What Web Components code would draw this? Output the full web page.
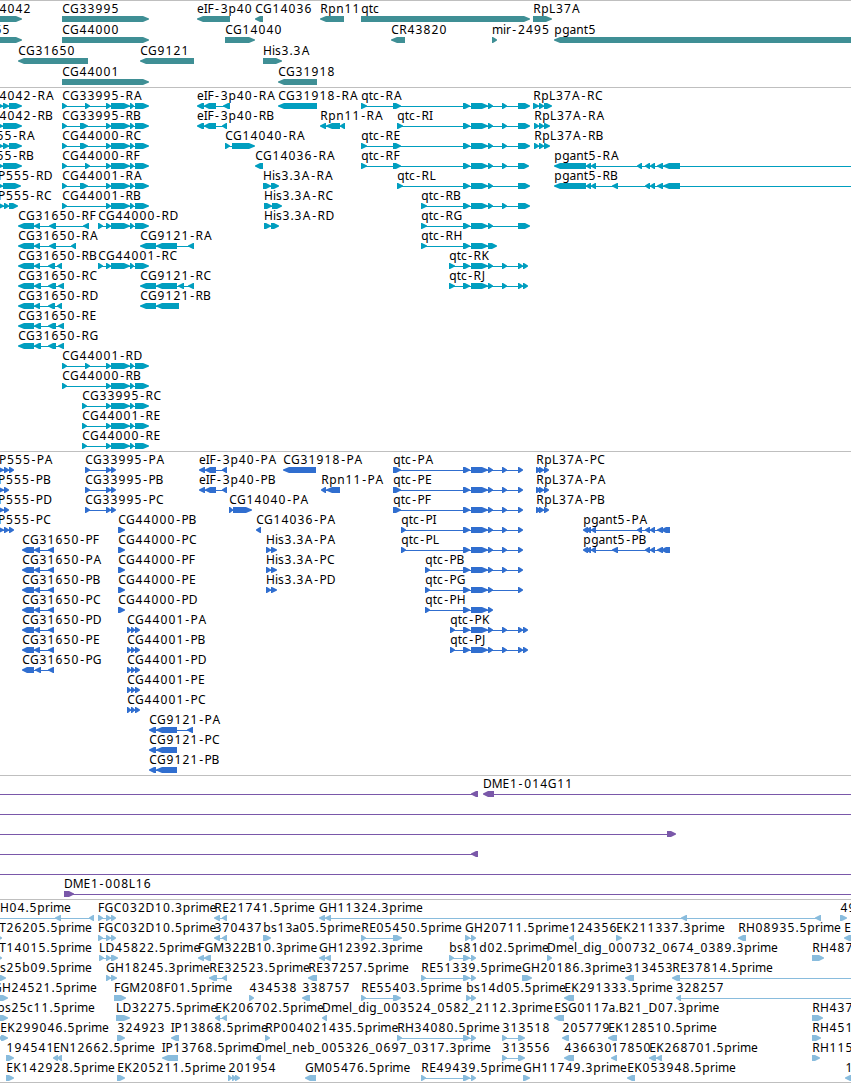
<!DOCTYPE html>
<html lang="en">
<head>
<meta charset="utf-8">
<title>Genome browser</title>
<style>
html, body { margin: 0; background: #fff; overflow: hidden; }
</style>
</head>
<body>
<genome-browser>
  <genome-track name="genes" pitch="21" style="--ink:#3f8f95"></genome-track>
  <genome-track name="transcripts" style="--ink:#009ebf"></genome-track>
  <genome-track name="proteins" style="--ink:#306ecf"></genome-track>
  <genome-track name="clones" style="--ink:#7a58a9"></genome-track>
  <genome-track name="ests" style="--ink:#89bcdd"></genome-track>
</genome-browser>
<script>
// Shared exon sets. Every feature reads: label | label x | strand | blocks | optional connector span
const SETS = {
  T: '106-111,111-130,130-134,135-149',
  Q: '463-470,471-488,488-493',
  U: '463-470,471-476',
  G: '645-650,650-655,657-663'
};
const DATA = {
genes: `4042|-1|>|-9-22;CG33995|62|>|62-149;eIF-3p40|197|<|197-230;CG14036|255|<|255-263;Rpn11|320|<|320-344;qtc|361|>|361-530;RpL37A|533|>|533-552
55|-6|>|-9-22;CG44000|62|>|62-149;CG14040|225|>|225-255;CR43820|391|<|391-405;mir-2495|492|>|492-497;pgant5|554|<|554-870
CG31650|18|<|18-88;CG9121|140|<|140-194;His3.3A|263|>|263-282
CG44001|62|>|62-149;CG31918|278|<|278-317`,
transcripts: `4042-RA|-1|>|-3-3,3-9,9-22;CG33995-RA|62|>|62-67,85-90,T;eIF-3p40-RA|197|<|197-204,204-216,223-230;CG31918-RA|278|<|278-317;qtc-RA|361|>|361-367,393-401,Q,502-507,518-530;RpL37A-RC|533|>|533-539,539-544,544-552
4042-RB|-1|>|-3-3,3-22;CG33995-RB|62|>|62-67,80-88,T;eIF-3p40-RB|197|<|197-204,204-216,222-227;Rpn11-RA|320|<|320-326,326-340,340-345;qtc-RI|397|>|397-403,Q,502-507,518-530;RpL37A-RA|534|>|534-539,539-544,544-550
55-RA|-4|>|-3-3,3-9,9-22;CG44000-RC|62|>|62-67,80-88,T;CG14040-RA|225|>|225-230,232-255;qtc-RE|361|>|361-367,393-401,Q,502-507,518-530;RpL37A-RB|534|>|534-539,539-544,544-550
55-RB|-4|>|-3-3,3-22;CG44000-RF|62|>|62-67,85-90,T;CG14036-RA|255|<|255-263;qtc-RF|361|>|361-367,393-401,Q,502-507,518-529;pgant5-RA|554|<|554-586,586-591,591-596,637-642,G,663-680|554-870
P555-RD|-2|>|-3-3,3-21;CG44001-RA|62|>|62-67,80-88,T;His3.3A-RA|263|>|263-271,271-279;qtc-RL|397|>|397-403,Q,518-530;pgant5-RB|554|<|554-586,586-591,591-596,612-618,G,663-680|554-870
P555-RC|-2|>|-3-4,4-9,9-18;CG44001-RB|62|>|62-67,T;His3.3A-RC|264|>|264-272,272-282;qtc-RB|421|>|421-427,Q,502-507,518-530
CG31650-RF|18|<|18-34,34-40,49-56,83-89;CG44000-RD|98|>|98-103,T;His3.3A-RD|264|>|264-271,271-279;qtc-RG|421|>|421-427,Q,518-530
CG31650-RA|18|<|18-34,34-40,49-56,71-76;CG9121-RA|140|<|140-156,156-177,188-194;qtc-RH|421|>|421-427,463-470,471-488,488-497
CG31650-RB|18|<|18-34,34-40,48-55,57-62;CG44001-RC|98|>|98-103,T;qtc-RK|449|>|449-455,Q,502-507,518-523,523-528
CG31650-RC|18|<|18-34,34-41,48-56,58-64;CG9121-RC|140|<|140-156,156-177,178-184,188-194;qtc-RJ|449|>|449-455,Q,502-507,518-523,523-528
CG31650-RD|18|<|18-34,34-40,48-55,57-62;CG9121-RB|140|<|140-156,156-179
CG31650-RE|18|<|18-34,34-41,48-56,58-64
CG31650-RG|18|<|18-34,34-41,48-56,58-64
CG44001-RD|62|>|62-67,85-90,T
CG44000-RB|62|>|62-67,T
CG33995-RC|82|>|82-87,T
CG44001-RE|82|>|82-87,T
CG44000-RE|82|>|82-87,T`,
proteins: `P555-PA|-1|>|-2-4,4-9,9-14;CG33995-PA|85|>|85-90,106-111,111-116;eIF-3p40-PA|199|<|199-205,205-216,222-227;CG31918-PA|283|<|283-316;qtc-PA|393|>|393-401,Q,502-507,518-523;RpL37A-PC|536|>|536-541,539-544,544-549
P555-PB|-2|>|-2-4,4-9;CG33995-PB|85|>|85-90,106-111,111-116;eIF-3p40-PB|199|<|199-205,205-216,222-227;Rpn11-PA|321|<|321-326,326-340;qtc-PE|393|>|393-401,Q,502-507,518-523;RpL37A-PA|536|>|536-541,539-544,544-549
P555-PD|-2|>|-2-4,4-9;CG33995-PC|85|>|85-90,106-111,111-116;CG14040-PA|229|>|229-233,233-252;qtc-PF|393|>|393-401,Q,502-507,518-523;RpL37A-PB|536|>|536-541,539-544,544-549
P555-PC|-2|>|-2-4,4-9,9-14;CG44000-PB|118|>|118-125;CG14036-PA|256|<|256-261;qtc-PI|401|>|401-406,Q,502-507,518-523;pgant5-PA|583|<|583-588,586-591,591-596,637-642,G,661-670
CG31650-PF|22|<|22-34,34-40,48-54;CG44000-PC|118|>|118-125;His3.3A-PA|266|>|266-271,271-277;qtc-PL|401|>|401-406,Q,502-507,518-523;pgant5-PB|583|<|583-588,586-591,591-596,612-618,G,661-670
CG31650-PA|22|<|22-34,34-40,48-54;CG44000-PF|118|>|118-125;His3.3A-PC|266|>|266-271,271-277;qtc-PB|425|>|425-430,Q,502-507,518-523
CG31650-PB|22|<|22-34,34-40,48-54;CG44000-PE|118|>|118-125;His3.3A-PD|266|>|266-271,271-277;qtc-PG|425|>|425-430,Q,518-523
CG31650-PC|22|<|22-34,34-40,48-54;CG44000-PD|118|>|118-125;qtc-PH|425|>|425-430,Q
CG31650-PD|22|<|22-34,34-40,48-54;CG44001-PA|127|>|127-131,131-135,135-140;qtc-PK|450|>|450-455,Q,502-507,518-523,523-528
CG31650-PE|22|<|22-34,34-40,48-54;CG44001-PB|127|>|127-131,131-135,135-140;qtc-PJ|450|>|450-455,Q,502-507,518-523,523-528
CG31650-PG|22|<|22-34,35-41,48-54;CG44001-PD|127|>|127-131,131-135,135-140
CG44001-PE|127|>|127-131,131-135,135-140
CG44001-PC|127|>|127-131,131-135,135-140
CG9121-PA|149|<|149-156,156-177,187-193
CG9121-PC|149|<|149-156,156-177
CG9121-PB|149|<|149-156,156-177`,
clones: `|0|<|471-478|-5-478;DME1-014G11|483|<|483-494|483-870
|0|>||-5-870
|0|>|667-676|-5-676
|0|<|471-478|-5-478
|0|>||-5-870
DME1-008L16|64|>|64-74|64-870`,
ests: `H04.5prime|0|<|55-61,89-94|-5-94;FGC032D10.3prime|98|>|98-103,106-111,111-116;RE21741.5prime|214|<|214-220,222-227;GH11324.3prime|319|<|319-325,325-331,681-687,815-821;49|840|>|840-847
T26205.5prime|-1|>|-3-2;FGC032D10.5prime|98|>|98-103,106-111,111-116;370437|214|<|214-220,222-227;bs13a05.5prime|263|>|263-271;RE05450.5prime|361|>|361-366,393-402;GH20711.5prime|465|>|465-470,471-476;124356|569|<|569-574;EK211337.3prime|616|>|616-622;RH08935.5prime|738|<|738-746;E|844|<|844-856
T14015.5prime|-1|>|-3-2;LD45822.5prime|99|>|99-104,106-111,111-118;FGM322B10.3prime|198|<|198-204,204-211;GH12392.3prime|319|<|319-325,325-331;bs81d02.5prime|449|>|449-454,U;Dmel_dig_000732_0674_0389.3prime|547|>|547-552;RH487|812|>|812-824
s25b09.5prime|0|>|-1-6;GH18245.3prime|106|>|106-111,111-117;RE32523.5prime|209|<|209-217,222-227;RE37257.5prime|308|<|308-317;RE51339.5prime|421|>|421-426,U;GH20186.3prime|522|>|522-532;313453|625|<|625-634;RE37814.5prime|672|<|672-680|672-870
GH24521.5prime|-7|>|-1-8;FGM208F01.5prime|114|>|114-126;434538|249|>|249-254;338757|302|<|302-310;RE55403.5prime|361|>|361-366,393-401;bs14d05.5prime|466|>|466-471,471-476;EK291333.5prime|564|<|564-574;328257|676|<|676-681|676-870
bs25c11.5prime|-3|>|-1-8;LD32275.5prime|116|>|116-130;EK206702.5prime|215|<|215-220,222-227;Dmel_dig_003524_0582_2112.3prime|322|<|322-327;ESG0117a.B21_D07.3prime|554|<|554-564;RH437|812|>|812-823
EK299046.5prime|0|>|-3-3,1-8;324923|117|>|117-125;IP13868.5prime|171|<|171-179;RP004021435.5prime|265|>|265-270;RH34080.5prime|397|>|397-402,U;313518|502|>|502-507,518-525;205779|562|<|562-569;EK128510.5prime|608|<|608-617;RH451|812|>|812-821
194541|6|>|6-14;EN12662.5prime|53|<|53-58,57-62;IP13768.5prime|162|<|162-178;Dmel_neb_005326_0697_0317.3prime|256|<|256-261;313556|502|>|502-507,518-525;436630|564|<|564-574;17850|611|<|611-617;EK268701.5prime|649|<|649-656,656-662;RH115|812|>|812-820
EK142928.5prime|6|>|6-14;EK205211.5prime|117|>|117-125;201954|228|>|228-232,232-236,235-240;GM05476.5prime|305|<|305-316;RE49439.5prime|421|>|421-426,U;GH11749.3prime|523|>|523-530;EK053948.5prime|627|<|627-635;1|845|<|845-856`
};

// Advance of each character in a 12px label
const ADV = {A:9,B:7.4,C:8,D:9,E:7,F:6.5,G:9,H:9,I:3.4,J:4,K:8,L:6.4,M:10.4,N:9,P:7.4,R:8,S:7,T:7,
  a:6,b:8,c:6,d:8,e:7,g:8,i:3,l:3,m:11,n:8,p:8,q:8,r:5,s:6,t:4,'-':6.3,'.':4,_:6};
const FONT = '12px "Noto Sans", "Open Sans", sans-serif';
const pen = document.createElement('canvas').getContext('2d');
pen.font = FONT;

function labelMarkup(text, x) {
  let at = x;
  const xs = [...text].map(ch => {
    const adv = ADV[ch] || 8;
    const pos = at + (adv - pen.measureText(ch).width) / 2;
    at += adv;
    return pos.toFixed(1);
  });
  return `<text y="12" x="${xs.join(' ')}">${text}</text>`;
}

function blockMarkup(s, e, strand) {
  const w = e - s, h = Math.min(w, w > 12 ? 7 : 6);
  if (strand === '>') {
    const n = e - h;
    return `<path d="M${s} 15H${n + 1}L${e} 17.5V18.5L${n + 1} 21H${s}Z"/>`;
  }
  const n = s + h;
  return `<path d="M${e} 15H${n - 1}L${s} 17.5V18.5L${n - 1} 21H${e}Z"/>`;
}

class TrackRow extends HTMLElement {
  set features(list) {
    const body = list.map(f => {
      const [name, x, strand, raw, span] = f.split('|');
      const expanded = raw.split(',').map(k => SETS[k] || k).join(',');
      const range = t => t.match(/^(-?\d+)-(-?\d+)$/).slice(1).map(Number);
      const blocks = raw ? expanded.split(',').map(range) : [];
      const [a, b] = span ? range(span) : [blocks[0][0], blocks[blocks.length - 1][1]];
      const line = blocks.length > 1 || span ? `<rect x="${a + 1}" y="18" width="${b - a - 2}" height="1"/>` : '';
      return line + blocks.map(([s, e]) => blockMarkup(s, e, strand)).join('') + (name ? labelMarkup(name, +x) : '');
    }).join('');
    this.attachShadow({ mode: 'open' }).innerHTML = `<style>
      :host { display: block; height: var(--pitch); }
      svg { display: block; width: 100%; height: 100%; overflow: visible; fill: var(--ink); }
      text { font: ${FONT}; fill: #000; white-space: pre; }
      rect { shape-rendering: crispEdges; }
    </style><svg>${body}</svg>`;
  }
}
customElements.define('track-row', TrackRow);

class GenomeTrack extends HTMLElement {
  connectedCallback() {
    const root = this.attachShadow({ mode: 'open' });
    const name = this.getAttribute('name');
    root.innerHTML = `<style>
      :host { display: flex; flex-direction: column; --pitch: ${this.getAttribute('pitch') || 20}px;
        border-top: 1px solid #bfbfbf; padding-bottom: ${name === 'genes' || name === 'ests' ? 2 : 3}px; }
    </style>`;
    for (const line of DATA[name].split('\n')) {
      const row = document.createElement('track-row');
      row.features = line.split(';');
      root.append(row);
    }
  }
}
customElements.define('genome-track', GenomeTrack);

class GenomeBrowser extends HTMLElement {
  constructor() {
    super();
    this.attachShadow({ mode: 'open' }).innerHTML = `<style>
      :host { display: flex; flex-direction: column; width: 851px; height: 1083px; box-sizing: border-box;
        overflow: hidden; background: #fff; border-bottom: 1px solid #bfbfbf; }
    </style><slot></slot>`;
  }
}
customElements.define('genome-browser', GenomeBrowser);
</script>
</body>
</html>
